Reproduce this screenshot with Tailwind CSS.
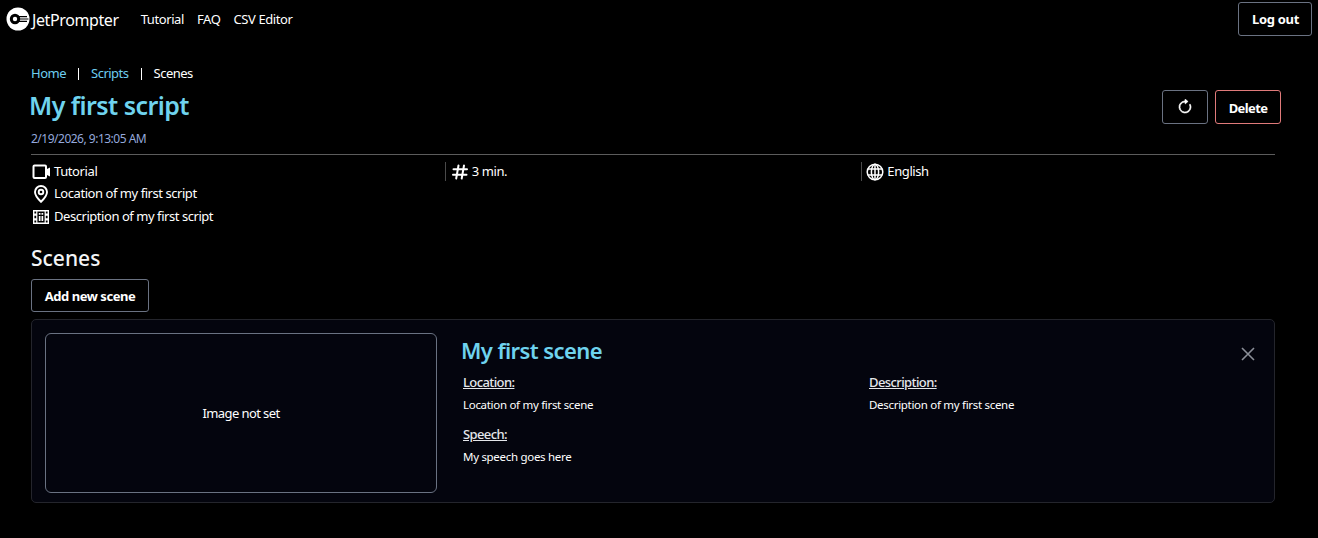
<!DOCTYPE html>
<html lang="en">
<head>
    <meta charset="UTF-8">
    <title>JetPrompter</title>
    <script src="https://cdn.jsdelivr.net/npm/@tailwindcss/browser@4"></script>
</head>
<body class="bg-black text-white h-[538px] overflow-hidden font-['Noto_Sans',sans-serif] text-[13px]">
    <!-- top bar -->
    <header class="h-[38px] flex items-center pl-[6px] pr-[6px]">
        <svg class="w-[24px] h-[24px] mr-[2px]" viewBox="0 0 24 24">
            <circle cx="12" cy="12" r="11.5" fill="#fff"/>
            <circle cx="9" cy="12" r="5.2" fill="#000"/>
            <circle cx="9" cy="12" r="2.2" fill="#fff"/>
            <path d="M13 9.6h8M13.5 12h9M13 14.4h8" stroke="#000" stroke-width="1.1"/>
        </svg>
        <span class="text-[16px] tracking-[-0.4px] pt-[1px]">JetPrompter</span>
        <nav class="flex gap-[13px] ml-[22px] tracking-[-0.4px] pt-[1px]">
            <a>Tutorial</a>
            <a>FAQ</a>
            <a>CSV Editor</a>
        </nav>
        <button class="ml-auto w-[74px] h-[34px] pt-[1px] pl-[1px] border border-gray-500 rounded-[3px] font-bold tracking-[-0.3px]">Log out</button>
    </header>

    <main class="px-[31px] pt-[26px] w-[1312px]">
        <div class="flex items-center h-[20px] tracking-[-0.5px]">
            <a class="text-[#6ecdf0]">Home</a>
            <span class="mx-[12px] w-px h-[12px] bg-white"></span>
            <a class="text-[#6ecdf0]">Scripts</a>
            <span class="mx-[12px] w-px h-[12px] bg-white"></span>
            <span>Scenes</span>
        </div>

        <div class="flex items-start justify-between mt-[4px]">
            <div>
                <h1 class="text-[25px] leading-[34px] font-semibold text-[#6fd3ee] -ml-[2px] tracking-[-0.55px]">My first script</h1>
                <p class="mt-[9px] text-[12px] leading-[16px] text-[#94a8dc] tracking-[-0.5px]">2/19/2026, 9:13:05 AM</p>
            </div>
            <div class="flex gap-[7px] mt-[2px]">
                <button class="w-[46px] h-[34px] border border-gray-500 rounded-[3px] flex items-center justify-center">
                    <svg class="w-[16px] h-[16px]" viewBox="0 0 16 16" fill="#fff" stroke="#fff" stroke-width="0.7">
                        <path fill-rule="evenodd" d="M8 3a5 5 0 1 0 4.546 2.914.5.5 0 0 1 .908-.417A6 6 0 1 1 8 2z"/>
                        <path d="M8 4.466V.534a.25.25 0 0 1 .41-.192l2.36 1.966c.12.1.12.284 0 .384L8.41 4.658A.25.25 0 0 1 8 4.466"/>
                    </svg>
                </button>
                <button class="w-[66px] h-[34px] pt-[4px] border border-[#e07a7a] rounded-[3px] font-bold tracking-[-0.6px]">Delete</button>
            </div>
        </div>

        <div class="w-[1244px] border-t border-[#5c5c5c] mt-[7px] pt-[6px]">
            <div class="grid grid-cols-3 h-[21px] tracking-[-0.4px]">
                <div class="flex items-center">
                    <svg class="w-[18px] h-[18px] ml-[1px] mr-[3px]" viewBox="0 0 18 18" fill="none" stroke="#fff" stroke-width="2">
                        <rect x="1.5" y="2.5" width="12.500" height="12.500" rx="1"/>
                        <path d="M15 6l3-1.500v9L15 12z" fill="#fff" stroke="none"/>
                    </svg>
                    <span class="ml-[1px]">Tutorial</span>
                </div>
                <div class="flex items-center self-center border-l border-[#4a4a4a] h-[19px] -ml-px pl-[6px]">
                    <svg class="w-[16px] h-[16px] mr-[4px]" viewBox="0 0 16 16" fill="none" stroke="#fff" stroke-width="2" stroke-linecap="round">
                        <path d="M6.5 1.500L4.200 14.500M12 1.500L9.700 14.500M1.500 5.300h13.500M1 10.700h13.500"/>
                    </svg>
                    <span>3 min.</span>
                </div>
                <div class="flex items-center self-center border-l border-[#4a4a4a] h-[19px] ml-px pl-[4px]">
                    <svg class="w-[18px] h-[18px] mr-[3px]" viewBox="0 0 18 18" fill="none" stroke="#fff" stroke-width="1.5">
                        <circle cx="9" cy="9" r="7.800"/>
                        <ellipse cx="9" cy="9" rx="3.600" ry="7.800"/>
                        <path d="M9 1.200v15.600M1.800 6h14.400M1.800 12h14.400"/>
                    </svg>
                    <span>English</span>
                </div>
            </div>
            <div class="flex items-center h-[24px] tracking-[-0.45px]">
                <svg class="w-[18px] h-[18px] ml-[1px] mr-[4px]" viewBox="0 0 18 18" fill="none" stroke="#fff" stroke-width="1.9">
                    <path d="M9 16.800C9 16.800 3 11 3 7a6 6 0 0 1 12 0c0 4-6 9.800-6 9.800z"/>
                    <circle cx="9" cy="7" r="2.300"/>
                </svg>
                <span>Location of my first script</span>
            </div>
            <div class="flex items-center h-[22px] tracking-[-0.45px]">
                <svg class="w-[18px] h-[18px] ml-[1px] mr-[4px]" viewBox="0 0 18 18">
                    <path fill="#fff" fill-rule="evenodd" d="M1 2h16v14H1zM2.400 3.400v2.200h1.800V3.400zm0 4.400v2.400h1.800V7.800zm0 4.600v2.200h1.800v-2.200zM13.800 3.400v2.200h1.800V3.400zm0 4.400v2.400h1.800V7.800zm0 4.600v2.200h1.800v-2.200zM5.400 3.400v11.200h7.200V3.400z"/>
                    <path fill="#fff" d="M6.800 5h1.700v1.800H6.800zM9.500 5h1.700v1.800H9.500zM6.800 8h1.700v5H6.800zM9.500 8h1.700v5H9.500z"/>
                </svg>
                <span>Description of my first script</span>
            </div>
        </div>

        <h2 class="mt-[16px] text-[21px] leading-[28px] font-medium text-gray-100">Scenes</h2>
        <button class="mt-[7px] w-[118px] h-[33px] pt-[2px] border border-gray-500 rounded-[3px] font-bold tracking-[-0.45px]">Add new scene</button>

        <section class="w-[1244px] h-[184px] mt-[7px] bg-[#04050e] border border-[#24252c] rounded-[5px] p-[13px] flex relative">
            <div class="w-[392px] h-[160px] pt-[2px] border border-gray-500 rounded-[6px] flex items-center justify-center tracking-[-0.6px]">Image not set</div>
            <div class="ml-[24px] pt-[2px] flex-1">
                <h3 class="text-[22px] leading-[30px] font-semibold text-[#6fd3ee] tracking-[-0.6px]">My first scene</h3>
                <div class="grid grid-cols-[406px_1fr] ml-[2px] mt-[9px] text-[11.5px] tracking-[-0.3px]">
                    <div class="h-[52px]">
                        <p class="text-[13px] leading-[16px] font-medium underline text-gray-200 tracking-[-0.6px]">Location:</p>
                        <p class="mt-[7px] leading-[16px]">Location of my first scene</p>
                    </div>
                    <div class="h-[52px]">
                        <p class="text-[13px] leading-[16px] font-medium underline text-gray-200 tracking-[-0.6px]">Description:</p>
                        <p class="mt-[7px] leading-[16px]">Description of my first scene</p>
                    </div>
                    <div>
                        <p class="text-[13px] leading-[16px] font-medium underline text-gray-200 tracking-[-0.6px]">Speech:</p>
                        <p class="mt-[7px] leading-[16px]">My speech goes here</p>
                    </div>
                </div>
            </div>
            <svg class="absolute right-[18px] top-[26px] w-[16px] h-[16px]" viewBox="0 0 16 16" stroke="#8b8f98" stroke-width="1.6">
                <path d="M2 2l12 12M14 2L2 14"/>
            </svg>
        </section>
    </main>
</body>
</html>
